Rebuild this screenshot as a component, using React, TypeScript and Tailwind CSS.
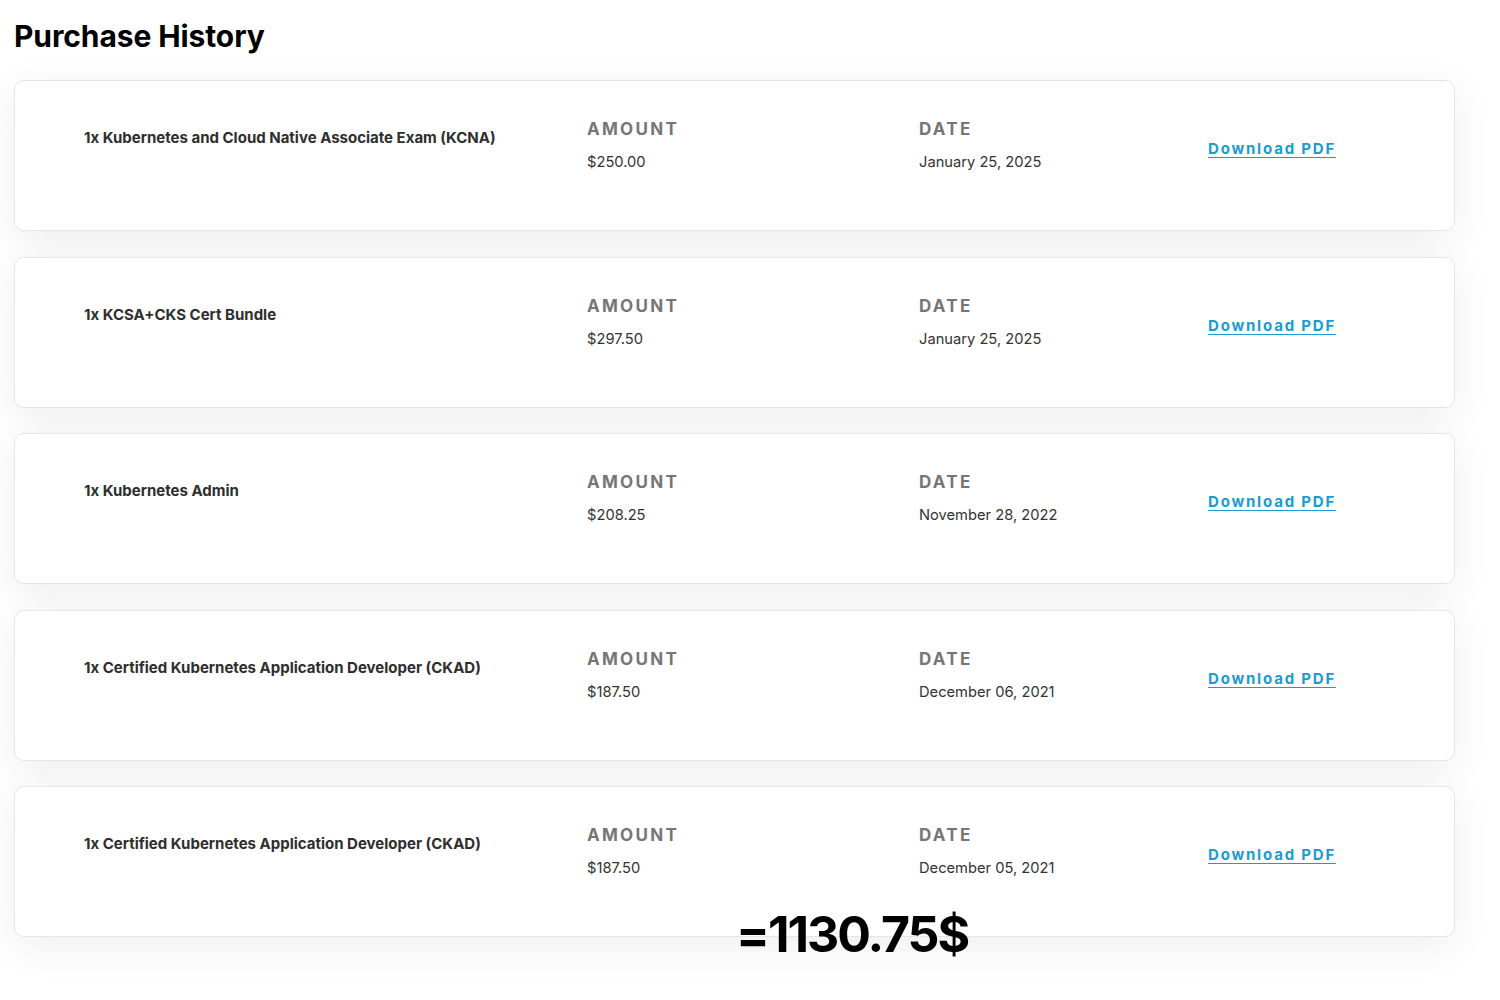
import React from "react";

const rows = [
  { name: "1x Kubernetes and Cloud Native Associate Exam (KCNA)", amount: "$250.00", date: "January 25, 2025" },
  { name: "1x KCSA+CKS Cert Bundle", amount: "$297.50", date: "January 25, 2025" },
  { name: "1x Kubernetes Admin", amount: "$208.25", date: "November 28, 2022" },
  { name: "1x Certified Kubernetes Application Developer (CKAD)", amount: "$187.50", date: "December 06, 2021" },
  { name: "1x Certified Kubernetes Application Developer (CKAD)", amount: "$187.50", date: "December 05, 2021" },
];

function Card({ name, amount, date }: { name: string; amount: string; date: string }) {
  return (
    <div className="h-[151px] rounded-[10px] border border-[#e6e6e6] bg-white shadow-[0_10px_40px_rgba(0,0,0,0.07)] pl-[69px] pt-[37px] grid grid-cols-[503px_332px_289px_auto] items-start">
      <div className="mt-[10px] text-[15px] leading-[20px] font-bold text-[#2e2e2e]">{name}</div>
      <div>
        <div className="text-[17px] leading-[22px] font-bold tracking-[0.135em] text-[#767676]">AMOUNT</div>
        <div className="mt-[12px] text-[14.7px] leading-[20px] text-[#333]">{amount}</div>
      </div>
      <div>
        <div className="text-[17px] leading-[22px] font-bold tracking-[0.135em] text-[#767676]">DATE</div>
        <div className="mt-[12px] text-[14.7px] leading-[20px] text-[#333]">{date}</div>
      </div>
      <div className="mt-[18px]">
        <a href="#" className="text-[15px] leading-[20px] font-bold tracking-[0.12em] text-[#1b9bd1] underline underline-offset-[3px]">
          Download PDF
        </a>
      </div>
    </div>
  );
}

export default function App() {
  return (
    <div className="min-h-[1000px] w-[1500px] bg-white font-['Inter',sans-serif] px-[14px] pt-[16px]">
      <h1 className="text-[30px] leading-[40px] font-bold text-black tracking-[-0.1px]">Purchase History</h1>
      <div className="relative mt-[24px] w-[1441px] flex flex-col gap-[25.5px]">
        {rows.map((r, i) => (
          <Card key={i} {...r} />
        ))}
        <div className="absolute left-[722px] top-[824px] text-[50px] leading-[60px] font-bold text-black tracking-[-2px]">
          =1130.75$
        </div>
      </div>
    </div>
  );
}
